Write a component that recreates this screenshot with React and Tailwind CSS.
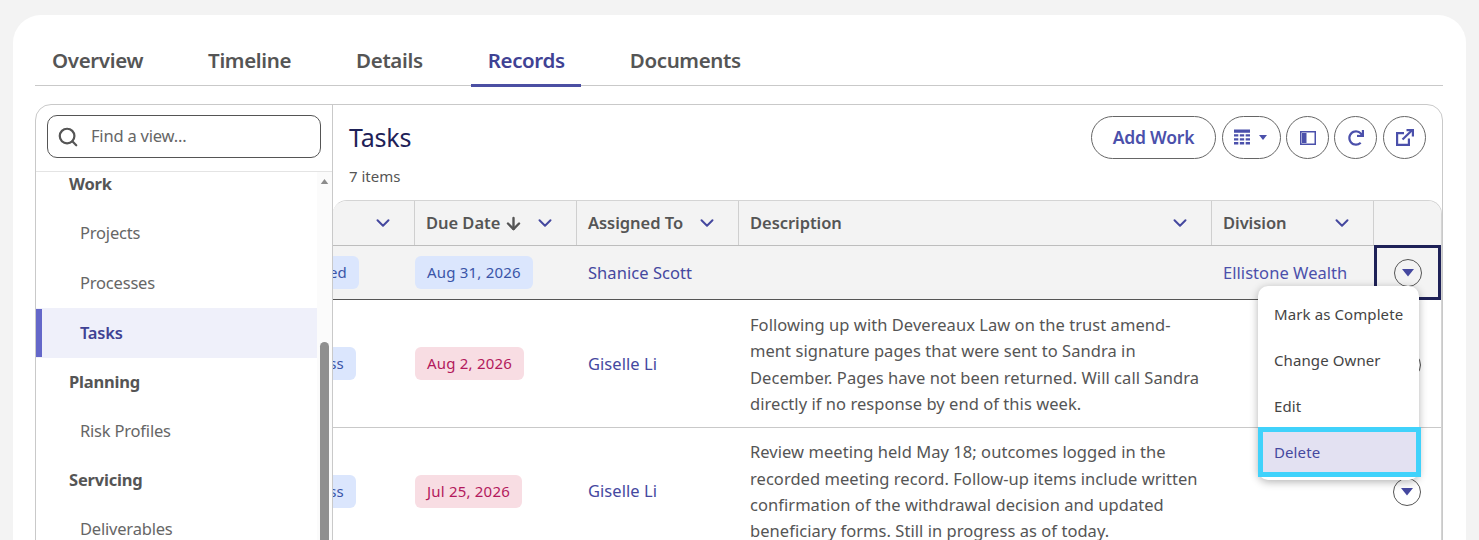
import React from 'react';
import { Search, ChevronDown, ArrowDown } from 'lucide-react';
import { FaRedo } from 'react-icons/fa';

const COLS = 'grid grid-cols-[82px_162px_162px_473px_162px_67px]';

const tabs = ['Overview', 'Timeline', 'Details', 'Records', 'Documents'];

const Chevron = () => <ChevronDown className="w-[22px] h-[22px] text-[#45489f]" strokeWidth={2.2} />;

const RowMenu = ({ className = '' }) => (
  <span className={`w-[28px] h-[28px] rounded-full border border-[#555] flex items-center justify-center ${className}`}>
    <svg width="12" height="8" viewBox="0 0 12 8"><path d="M0 0h12L6 7.5z" fill="#45489f" /></svg>
  </span>
);

const IconButton = ({ children, className = 'w-[43px]' }) => (
  <button className={`h-[43px] rounded-full border border-[#666] flex items-center justify-center text-[#4b50ab] ${className}`}>
    {children}
  </button>
);

const Head = ({ label, arrow, className = '' }) => (
  <div className={`h-[44px] border-r border-[#cfcfcf] flex items-center pl-[11px] pr-[20px] justify-between font-semibold text-[#555] tracking-[-0.05px] ${className}`}>
    <span className="flex items-center gap-[4px]">
      {label}
      {arrow && <ArrowDown className="w-[19px] h-[19px] mt-[1px]" strokeWidth={3} />}
    </span>
    <Chevron />
  </div>
);

const Pill = ({ children, tone, className = '' }) => (
  <span className={`h-[33px] inline-flex items-center rounded-[6px] px-[12px] text-[15px] tracking-[0.2px] ${tone === 'red' ? 'bg-[#f8dde3] text-[#b3195c]' : 'bg-[#dbe6fd] text-[#3a55a8]'} ${className}`}>
    {children}
  </span>
);

const Row = ({ status, statusPad, due, tone, who, lines = [], h, active, last, division }) => (
  <div className={`${COLS} ${h} ${active ? 'bg-[#f3f3f3] border-b border-[#555]' : last ? '' : 'border-b border-[#c9c9c9]'}`}>
    <div className={`flex items-center justify-end overflow-hidden ${statusPad}`}>
      <Pill className="shrink-0">{status}</Pill>
    </div>
    <div className="flex items-center"><Pill tone={tone}>{due}</Pill></div>
    <div className={`flex items-center pl-[11px] text-[#45489f] ${last ? '' : 'pt-[2px]'}`}>{who}</div>
    <div className="flex flex-col justify-center pt-[2px] pl-[11px] text-[#555] leading-[26.4px] whitespace-nowrap">
      {lines.map(l => <div key={l}>{l}</div>)}
    </div>
    <div className="flex items-center pt-[2px] pl-[11px] text-[#4b50ab] whitespace-nowrap">{division}</div>
    {active ? (
      <div className="flex items-center justify-center border-[3px] border-[#1e2157] mt-[-1px] mb-[-1px] pt-[1px]"><RowMenu /></div>
    ) : (
      <div className="flex items-center justify-center pr-[2px] pt-[2px]"><RowMenu /></div>
    )}
  </div>
);

const NavHead = ({ children }) => <div className="h-[48px] flex items-center pl-[33px] font-bold text-[#555]">{children}</div>;
const NavItem = ({ children, active }) => (
  <div className={`h-[50px] flex items-center pl-[44px] ${active ? 'bg-[#eff0fa] text-[#3f4294] font-semibold' : 'text-[#666]'}`}>
    {active && <span className="absolute left-0 w-[6px] h-[48px] bg-[#6467c9]" />}
    {children}
  </div>
);

const MenuItem = ({ children }) => <div className="h-[46px] flex items-center pl-[16px] text-[#444] text-[15px] tracking-[0.1px]">{children}</div>;

export default function App() {
  return (
    <div className="h-[540px] overflow-hidden bg-[#f3f3f3] pt-[15px] pl-[13px] pr-[13px] font-['Noto_Sans','Open_Sans',sans-serif] text-[16.5px] tracking-[-0.2px]">
      <div className="bg-white rounded-t-[28px] h-[600px] pl-[22px] pr-[23px] pt-[25px]">
        {/* Tabs */}
        <div className="flex border-b border-[#c9c9c9] h-[46px] pl-[17px] gap-[65px] text-[20.5px] font-semibold tracking-[-0.35px] text-[#555]">
          {tabs.map(t => (
            <div key={t} className={`relative h-[46px] pt-[5px] ${t === 'Records' ? 'text-[#3f4294]' : ''}`}>
              {t}
              {t === 'Records' && <span className="absolute left-[-17px] right-[-16px] bottom-[-1px] h-[3px] bg-[#4b4fa3]" />}
            </div>
          ))}
        </div>

        {/* Panel */}
        <div className="mt-[18px] flex h-[500px] border border-[#c9c9c9] rounded-[16px] overflow-hidden">
          {/* Sidebar */}
          <aside className="w-[297px] shrink-0 border-r border-[#c9c9c9] flex flex-col">
            <div className="h-[67px] border-b border-[#e4e4e4] pl-[11px] pr-[11px] pt-[10px]">
              <div className="h-[43px] border border-[#555] rounded-[10px] flex items-center pl-[9px] text-[#666]">
                <Search className="w-[22px] h-[22px] text-[#555] mr-[12px]" strokeWidth={2.4} />
                Find a view...
              </div>
            </div>
            <div className="flex flex-1 min-h-0">
              <div className="relative w-[281px]">
                <div className="mt-[-12px]">
                  <NavHead>Work</NavHead>
                  <NavItem>Projects</NavItem>
                  <NavItem>Processes</NavItem>
                  <NavItem active>Tasks</NavItem>
                  <NavHead>Planning</NavHead>
                  <NavItem>Risk Profiles</NavItem>
                  <NavHead>Servicing</NavHead>
                  <NavItem>Deliverables</NavItem>
                </div>
              </div>
              <div className="w-[15px] bg-[#fbfbfb] flex flex-col items-center pt-[7px]">
                <svg width="9" height="6" viewBox="0 0 9 6"><path d="M4.5 0L9 6H0z" fill="#8c8c8c" /></svg>
                <div className="w-[9px] h-[300px] mt-[158px] rounded-full bg-[#8f8f8f]" />
              </div>
            </div>
          </aside>

          {/* Main */}
          <main className="flex-1 min-w-0 relative">
            <div className="h-[95px] pl-[16px] pr-[16px] flex justify-between">
              <div>
                <div className="text-[25px] text-[#1e2157] mt-[12px] leading-[40px]">Tasks</div>
                <div className="text-[15px] text-[#555] mt-[8px] tracking-[0px]">7 items</div>
              </div>
              <div className="flex gap-[5px] pt-[11px] font-semibold">
                <IconButton className="w-[125px] h-[42px] text-[17.5px]">Add Work</IconButton>
                <IconButton className="w-[59px] gap-[9px] ml-[1px] pr-[2px]">
                  <svg width="16" height="17" viewBox="0 0 17 17" fill="#4b50ab">
                    <path d="M0 0h17v3.5H0zM0 5h4.6v2.5H0zM6.2 5h4.6v2.5H6.2zM12.4 5H17v2.5h-4.6zM0 9.2h4.6v2.5H0zM6.2 9.2h4.6v2.5H6.2zM12.4 9.2H17v2.5h-4.6zM0 13.4h4.6V16H0zM6.2 13.4h4.6V16H6.2zM12.4 13.4H17V16h-4.6z" />
                  </svg>
                  <svg width="8" height="5" viewBox="0 0 8 5"><path d="M0 0h8L4 5z" fill="#4b50ab" /></svg>
                </IconButton>
                <IconButton>
                  <svg width="16" height="14" viewBox="0 0 16 14"><rect x="0.75" y="0.75" width="14.5" height="12.5" fill="none" stroke="#4b50ab" strokeWidth="1.5" /><rect x="2" y="2" width="4.5" height="10" fill="#4b50ab" /></svg>
                </IconButton>
                <IconButton><FaRedo className="w-[16px] h-[16px]" /></IconButton>
                <IconButton className="w-[43px] ml-[1px]">
                  <svg width="18" height="17" viewBox="0 0 18 17" fill="none" stroke="#4b50ab" strokeWidth="2.2">
                    <path d="M8 4.1H1.1v11.8h11.8V9.5" />
                    <path d="M6.5 10.5L15.5 1.8" />
                    <path d="M10.5 1.1h6.4v6.4" />
                  </svg>
                </IconButton>
              </div>
            </div>

            {/* Table */}
            <div className="border-t border-r border-[#d4d4d4] rounded-tl-[14px] rounded-tr-[14px] overflow-hidden tracking-[0.05px]">
              <div className={`${COLS} bg-[#f3f3f3] border-b border-[#bdbdbd]`}>
                <Head label="" />
                <Head label="Due Date" arrow />
                <Head label="Assigned To" />
                <Head label="Description" />
                <Head label="Division" />
                <div />
              </div>
              <Row h="h-[54px]" active status="Not Started" statusPad="pr-[56px]" due="Aug 31, 2026" who="Shanice Scott" division="Ellistone Wealth" />
              <Row
                h="h-[128px]"
                status="In Progress"
                statusPad="pr-[59px]"
                due="Aug 2, 2026"
                tone="red"
                who="Giselle Li"
                lines={[
                  'Following up with Devereaux Law on the trust amend-',
                  'ment signature pages that were sent to Sandra in',
                  'December. Pages have not been returned. Will call Sandra',
                  'directly if no response by end of this week.',
                ]}
              />
              <Row
                h="h-[126px]"
                last
                status="In Progress"
                statusPad="pr-[59px]"
                due="Jul 25, 2026"
                tone="red"
                who="Giselle Li"
                lines={[
                  'Review meeting held May 18; outcomes logged in the',
                  'recorded meeting record. Follow-up items include written',
                  'confirmation of the withdrawal decision and updated',
                  'beneficiary forms. Still in progress as of today.',
                ]}
              />
            </div>

            {/* Row action menu */}
            <div className="absolute left-[925px] top-[181px] w-[161px] h-[194px] bg-white rounded-[10px] shadow-[0_2px_8px_rgba(0,0,0,0.3)] pt-[5px]">
              <MenuItem>Mark as Complete</MenuItem>
              <MenuItem>Change Owner</MenuItem>
              <MenuItem>Edit</MenuItem>
              <div className="h-[50px] mr-[-2px] mt-[-2px] border-[5px] border-[#40d2fb] bg-[#e3e1f2] flex items-center pl-[11px] text-[#45489f] text-[15px] tracking-[0.1px]">Delete</div>
            </div>
          </main>
        </div>
      </div>
    </div>
  );
}
